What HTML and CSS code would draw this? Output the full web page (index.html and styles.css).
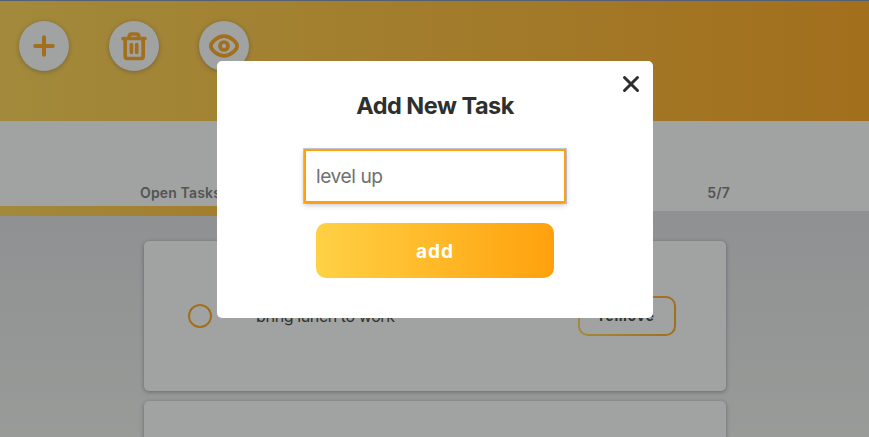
FILE: index.html
```html
<!DOCTYPE html>
<html lang="en">
<head>
<meta charset="utf-8">
<title>Tasks</title>
<link rel="stylesheet" href="styles.css">
</head>
<body>
<header class="header">
  <button class="round" aria-label="Add"><svg width="32" height="32" viewBox="0 0 32 32"><path d="M16 7.200v17.600M7.200 16h17.600" stroke-width="4"/></svg></button>
  <button class="round" aria-label="Delete"><svg width="32" height="32" viewBox="0 0 32 32"><path d="M5 8.500h22M7.200 8.500v17.700q0 2.300 2.300 2.300h13.400q2.300 0 2.300-2.300v-17.700M11.300 8V6q0-2 2.300-2h4.800q2.300 0 2.300 2v2M13.400 14.700v7.600M18.700 14.700v7.600" stroke-width="3.700"/></svg></button>
  <button class="round" aria-label="Show"><svg width="32" height="32" viewBox="0 0 32 32"><path d="M3.100 16C2 13.500 9 6.200 16 6.200S30 13.500 28.900 16C30 18.500 23 25.800 16 25.800S2 18.500 3.100 16Z" stroke-width="3.800"/><circle cx="16" cy="16" r="4" stroke-width="3.700"/></svg></button>
</header>
<section class="status"><div class="counts"><span>Open Tasks</span><span>5/7</span></div></section>
<div class="progress"></div>
<main class="list">
  <article class="card"><span class="check"></span><span class="name">bring lunch to work</span><button class="remove">remove</button></article>
  <article class="card"></article>
</main>
<div class="overlay">
  <section class="modal">
    <button class="close" aria-label="Close"><svg width="18" height="18" viewBox="0 0 18 18"><path d="M2.500 2.500l13 13M15.500 2.500l-13 13"/></svg></button>
    <h2>Add New Task</h2>
    <input class="field" type="text" placeholder="level up">
    <button class="add">add</button>
  </section>
</div>
</body>
</html>
```
FILE: styles.css
```css
* { box-sizing: border-box; }
body { margin: 0; height: 437px; overflow: hidden; font-family: Inter, "Liberation Sans", sans-serif; color: #2e302e; background: linear-gradient(#dddee2 211px, #eef0ee); }
button { font-family: inherit; border: 0; padding: 0; }
.header { height: 121px; padding: 20px 19px; border-top: 1px solid #7388a8; background: linear-gradient(to right, #ffd145, #ffa10d); display: flex; gap: 40px; }
.round { width: 50px; height: 50px; border-radius: 50%; background: #fcfffd; display: grid; place-items: center; box-shadow: 0 1px 5px rgba(50, 50, 70, .4); }
.round svg { fill: none; stroke: #ffa10d; stroke-linecap: round; stroke-linejoin: round; }
.status { height: 90px; background: #fcfffd; display: flex; justify-content: center; align-items: flex-end; }
.counts { width: 590px; padding-bottom: 9px; display: flex; justify-content: space-between; font-size: 14px; line-height: 18px; font-weight: 600; color: #707070; letter-spacing: .15px; position: relative; left: .5px; }
.progress { width: 28.57%; height: 10px; margin-top: -5px; background: linear-gradient(to right, #ffd145, #ffb928); position: relative; }
.list { width: 582px; height: 196px; overflow: visible; margin: 25px auto 0 144px; display: grid; grid-template-rows: 150px 150px; gap: 10px; }
.card { height: 150px; border-radius: 5px; background: #fcfffd; box-shadow: 0 1px 4px rgba(50, 50, 93, .5); padding: 0 50px 0 44px; display: flex; align-items: center; }
.check { width: 24px; height: 24px; border: 2px solid #ffa10d; border-radius: 50%; }
.name { margin-left: 44px; font-size: 16px; letter-spacing: -.4px; }
.remove { margin-left: auto; width: 98px; height: 40px; border: 2px solid transparent; border-radius: 10px; background: linear-gradient(#fcfffd, #fcfffd) padding-box, linear-gradient(to right, #ffd145, #ffa10d) border-box; color: #2e302e; font-size: 13.500px; font-weight: 700; letter-spacing: 1px; }
.overlay { position: fixed; inset: 0; background: rgba(49, 52, 49, .45); padding: 61px 0 0 217px; }
.modal { position: relative; width: 436px; height: 257px; border-radius: 5px; background: #fff; display: flex; flex-direction: column; align-items: center; }
.close { position: absolute; top: 13.500px; right: 13.500px; width: 18px; height: 18px; background: none; }
.close svg { display: block; fill: none; stroke: #2e302e; stroke-width: 3; stroke-linecap: round; }
h2 { margin: 29px 0 0; height: 32px; line-height: 32px; font-size: 23.500px; font-weight: 700; letter-spacing: -.5px; }
.field { width: 262px; height: 54px; margin-top: 27px; padding: 0 10px; border: 2px solid #ffa10d; border-radius: 0; outline: 0; font: 19.200px Inter, sans-serif; letter-spacing: -.45px; box-shadow: 0 0 0 1px rgba(50, 50, 93, .25), 0 2px 5px rgba(50, 50, 93, .3); }
.field::placeholder { color: #707070; opacity: 1; }
.add { width: 238px; height: 55px; margin-top: 20px; padding-top: 2px; border-radius: 10px; background: linear-gradient(to right, #ffd145, #ffa10d); color: #fff; font-size: 19px; font-weight: 700; letter-spacing: 1px; }
```
